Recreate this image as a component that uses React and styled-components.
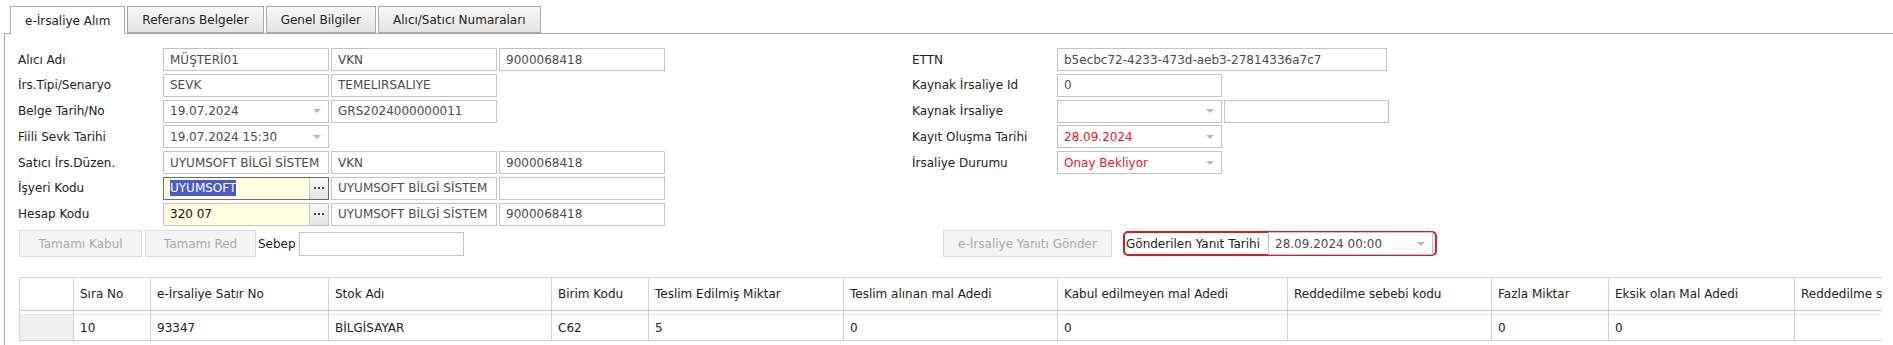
import React from 'react';
import styled, { createGlobalStyle } from 'styled-components';

const FONT = `"DejaVu Sans", Verdana, sans-serif`;

const Global = createGlobalStyle`
  html, body { margin: 0; padding: 0; background: #fff; }
  body { font-family: ${FONT}; font-size: 12px; color: #222; }
  * { box-sizing: border-box; }
`;

const Page = styled.div`
  width: 1893px;
  height: 345px;
  overflow: hidden;
  padding: 6px 0 0 4px;
`;

const TabStrip = styled.div`
  display: flex;
  gap: 2px;
  padding-left: 6px;
  height: 27px;
  position: relative;
  z-index: 1;
`;

const Tab = styled.div`
  height: ${(p) => (p.$active ? '28px' : '27px')};
  padding: 0 14px;
  display: flex;
  align-items: center;
  white-space: nowrap;
  border: 1px solid #a9a9a9;
  border-bottom: ${(p) => (p.$active ? 'none' : '1px solid #a9a9a9')};
  background: ${(p) => (p.$active ? '#fff' : 'linear-gradient(#f7f7f7, #e3e3e3)')};
  color: #222;
`;

const Panel = styled.div`
  border-top: 1px solid #a9a9a9;
  border-left: 1px solid #a9a9a9;
  padding: 14px 0 0 13px;
  height: 320px;
`;

const FormArea = styled.div`
  display: flex;
`;

const FieldColumn = styled.div`
  display: flex;
  flex-direction: column;
  gap: 2.75px;
  width: ${(p) => p.$w || 'auto'};
`;

const FieldRow = styled.div`
  display: flex;
  align-items: center;
  gap: 2px;
  height: 23px;
`;

const FieldLabel = styled.div`
  width: 143px;
  white-space: nowrap;
  color: #222;
`;

const TextBox = styled.div`
  width: ${(p) => p.$w || '166px'};
  height: 23px;
  border: 1px solid #c3c3c3;
  background: ${(p) => p.$bg || '#fff'};
  color: ${(p) => p.$color || '#4b4b4b'};
  padding: 0 6px;
  display: flex;
  align-items: center;
  white-space: nowrap;
  overflow: hidden;
`;

const Combo = styled(TextBox)`
  justify-content: space-between;
  padding-right: 7px;
`;

const ComboText = styled.span`
  overflow: hidden;
`;

const ComboArrow = styled.span`
  flex: none;
  width: 0;
  height: 0;
  border-left: 4px solid transparent;
  border-right: 4px solid transparent;
  border-top: 4px solid #b9b9b9;
`;

const Lookup = styled.div`
  width: 166px;
  height: 23px;
  display: flex;
  border: 1px solid ${(p) => (p.$focused ? '#6d6d6d' : '#c3c3c3')};
`;

const LookupInput = styled.div`
  flex: 1;
  background: #ffffe0;
  color: #111;
  padding: 0 6px;
  display: flex;
  align-items: center;
  white-space: nowrap;
  overflow: hidden;
`;

const LookupButton = styled.div`
  width: 19px;
  border-left: 1px solid #c3c3c3;
  background: linear-gradient(#f8f8f8, #e4e4e4);
  display: flex;
  align-items: center;
  justify-content: center;
  gap: 2px;
`;

const Dot = styled.span`
  width: 2px;
  height: 2px;
  background: #444;
`;

const Selected = styled.span`
  background: #4a5bd2;
  color: #fff;
  line-height: 16px;
`;

const ActionBar = styled.div`
  display: flex;
  align-items: center;
  height: 27px;
  margin-top: 4.5px;
`;

const ActionGroup = styled.div`
  display: flex;
  align-items: center;
  width: ${(p) => p.$w || 'auto'};
  gap: ${(p) => p.$gap || '3px'};
  padding-left: ${(p) => p.$pl || '0'};
`;

const ActionButton = styled.div`
  width: ${(p) => p.$w};
  height: 27px;
  border: 1px solid #dcdcdc;
  background: #f4f4f4;
  color: #a9a9a9;
  display: flex;
  align-items: center;
  justify-content: center;
  white-space: nowrap;
`;

const InlineLabel = styled.div`
  white-space: nowrap;
  color: #222;
  margin-left: ${(p) => p.$ml || '0'};
`;

const HighlightBox = styled.div`
  display: flex;
  align-items: center;
  justify-content: space-between;
  width: 314px;
  height: 25px;
  margin-left: 8px;
  border: 2px solid #e3151f;
  border-radius: 5px;
  padding: 0 2px 0 1px;
`;

const GridWrap = styled.div`
  margin: 20px 0 0 1px;
  width: 1863px;
  overflow: hidden;
  border-left: 1px solid #d2d2d2;
`;

const Grid = styled.div`
  display: grid;
  grid-template-columns: ${(p) => p.$cols};
  width: max-content;
`;

const HeadCell = styled.div`
  height: 34px;
  border-top: 1px solid #d2d2d2;
  border-bottom: 1px solid #c9c9c9;
  border-right: 1px solid #d2d2d2;
  padding: 0 6px;
  display: flex;
  align-items: center;
  white-space: nowrap;
  overflow: hidden;
  color: #222;
`;

const BodyCell = styled.div`
  height: 30px;
  padding: 4px 6px 0;
  border-right: 1px solid #d2d2d2;
  border-bottom: 1px solid #cfcfcf;
  background:
    linear-gradient(#e7e7e7, #e7e7e7) no-repeat 0 3px / 100% 1px,
    linear-gradient(${(p) => (p.$indicator ? '#efefef' : '#fff')}, ${(p) => (p.$indicator ? '#efefef' : '#fff')}) no-repeat 0 4px / 100% 100%,
    #fff;
  display: flex;
  align-items: center;
  white-space: nowrap;
  overflow: hidden;
  color: #222;
`;

const columns = [
  { title: '', w: 54 },
  { title: 'Sıra No', w: 77 },
  { title: 'e-İrsaliye Satır No', w: 178 },
  { title: 'Stok Adı', w: 223 },
  { title: 'Birim Kodu', w: 97 },
  { title: 'Teslim Edilmiş Miktar', w: 195 },
  { title: 'Teslim alınan mal Adedi', w: 214 },
  { title: 'Kabul edilmeyen mal Adedi', w: 230 },
  { title: 'Reddedilme sebebi kodu', w: 204 },
  { title: 'Fazla Miktar', w: 117 },
  { title: 'Eksik olan Mal Adedi', w: 186 },
  { title: 'Reddedilme sebebi', w: 200 },
];

const row = ['', '10', '93347', 'BİLGİSAYAR', 'C62', '5', '0', '0', '', '0', '0', ''];

const DropDown = ({ value, color, w }) => (
  <Combo $color={color} $w={w}>
    <ComboText>{value}</ComboText>
    <ComboArrow />
  </Combo>
);

const LookupBox = ({ children, focused }) => (
  <Lookup $focused={focused}>
    <LookupInput>{children}</LookupInput>
    <LookupButton>
      <Dot />
      <Dot />
      <Dot />
    </LookupButton>
  </Lookup>
);

export default function App() {
  return (
    <>
      <Global />
      <Page>
        <TabStrip>
          <Tab $active>e-İrsaliye Alım</Tab>
          <Tab>Referans Belgeler</Tab>
          <Tab>Genel Bilgiler</Tab>
          <Tab>Alıcı/Satıcı Numaraları</Tab>
        </TabStrip>
        <Panel>
          <FormArea>
            <FieldColumn $w="894px">
              <FieldRow>
                <FieldLabel>Alıcı Adı</FieldLabel>
                <TextBox>MÜŞTERİ01</TextBox>
                <TextBox>VKN</TextBox>
                <TextBox>9000068418</TextBox>
              </FieldRow>
              <FieldRow>
                <FieldLabel>İrs.Tipi/Senaryo</FieldLabel>
                <TextBox>SEVK</TextBox>
                <TextBox>TEMELIRSALIYE</TextBox>
              </FieldRow>
              <FieldRow>
                <FieldLabel>Belge Tarih/No</FieldLabel>
                <DropDown value="19.07.2024" />
                <TextBox>GRS2024000000011</TextBox>
              </FieldRow>
              <FieldRow>
                <FieldLabel>Fiili Sevk Tarihi</FieldLabel>
                <DropDown value="19.07.2024 15:30" />
              </FieldRow>
              <FieldRow>
                <FieldLabel>Satıcı İrs.Düzen.</FieldLabel>
                <TextBox>UYUMSOFT BİLGİ SİSTEM</TextBox>
                <TextBox>VKN</TextBox>
                <TextBox>9000068418</TextBox>
              </FieldRow>
              <FieldRow>
                <FieldLabel>İşyeri Kodu</FieldLabel>
                <LookupBox focused>
                  <Selected>UYUMSOFT</Selected>
                </LookupBox>
                <TextBox>UYUMSOFT BİLGİ SİSTEM</TextBox>
                <TextBox />
              </FieldRow>
              <FieldRow>
                <FieldLabel>Hesap Kodu</FieldLabel>
                <LookupBox>320 07</LookupBox>
                <TextBox>UYUMSOFT BİLGİ SİSTEM</TextBox>
                <TextBox>9000068418</TextBox>
              </FieldRow>
            </FieldColumn>
            <FieldColumn>
              <FieldRow>
                <FieldLabel>ETTN</FieldLabel>
                <TextBox $w="330px">b5ecbc72-4233-473d-aeb3-27814336a7c7</TextBox>
              </FieldRow>
              <FieldRow>
                <FieldLabel>Kaynak İrsaliye Id</FieldLabel>
                <TextBox $w="165px">0</TextBox>
              </FieldRow>
              <FieldRow>
                <FieldLabel>Kaynak İrsaliye</FieldLabel>
                <DropDown value="" w="165px" />
                <TextBox $w="165px" />
              </FieldRow>
              <FieldRow>
                <FieldLabel>Kayıt Oluşma Tarihi</FieldLabel>
                <DropDown value="28.09.2024" color="#f0141e" w="165px" />
              </FieldRow>
              <FieldRow>
                <FieldLabel>İrsaliye Durumu</FieldLabel>
                <DropDown value="Onay Bekliyor" color="#f0141e" w="165px" />
              </FieldRow>
            </FieldColumn>
          </FormArea>

          <ActionBar>
            <ActionGroup $w="925px" $pl="1px">
              <ActionButton $w="123px">Tamamı Kabul</ActionButton>
              <ActionButton $w="111px">Tamamı Red</ActionButton>
              <InlineLabel $ml="-1px">Sebep</InlineLabel>
              <TextBox $w="165px" style={{ height: 24 }} />
            </ActionGroup>
            <ActionGroup>
              <ActionButton $w="169px">e-İrsaliye Yanıtı Gönder</ActionButton>
              <HighlightBox>
                <InlineLabel>Gönderilen Yanıt Tarihi</InlineLabel>
                <DropDown value="28.09.2024 00:00" w="165px" />
              </HighlightBox>
            </ActionGroup>
          </ActionBar>

          <GridWrap>
            <Grid $cols={columns.map((c) => `${c.w}px`).join(' ')}>
              {columns.map((c, i) => (
                <HeadCell key={`h${i}`}>{c.title}</HeadCell>
              ))}
              {row.map((v, i) => (
                <BodyCell key={`b${i}`} $indicator={i === 0}>
                  {v}
                </BodyCell>
              ))}
            </Grid>
          </GridWrap>
        </Panel>
      </Page>
    </>
  );
}
